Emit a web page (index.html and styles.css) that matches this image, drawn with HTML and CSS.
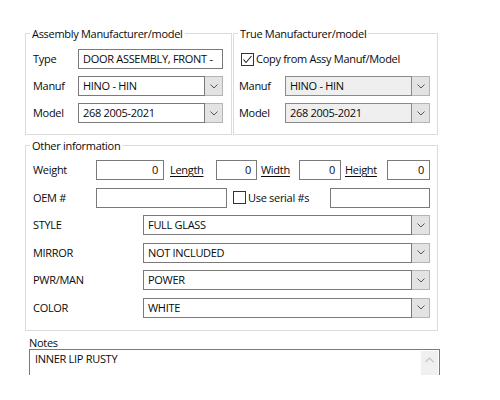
FILE: index.html
```html
<!DOCTYPE html>
<html>
<head>
<meta charset="utf-8">
<link rel="stylesheet" href="styles.css">
</head>
<body>
<div class="page">
  <div class="top">
    <div class="grp grp-assy">
      <div class="legend">Assembly Manufacturer/model</div>
      <div class="rows rows-top rows-assy">
        <div class="row">
          <span class="lbl lbl-assy">Type</span>
          <div class="tb tb-type"><span class="txt">DOOR ASSEMBLY, FRONT -</span></div>
        </div>
        <div class="row">
          <span class="lbl lbl-assy">Manuf</span>
          <div class="combo combo-top">
            <div class="field">HINO - HIN</div>
            <div class="btn"><svg width="8" height="5" viewBox="0 0 8 5"><polyline points="0.5,0.5 4,4 7.5,0.5" fill="none" stroke="#555" stroke-width="1"/></svg></div>
          </div>
        </div>
        <div class="row">
          <span class="lbl lbl-assy">Model</span>
          <div class="combo combo-top">
            <div class="field">268 2005-2021</div>
            <div class="btn"><svg width="8" height="5" viewBox="0 0 8 5"><polyline points="0.5,0.5 4,4 7.5,0.5" fill="none" stroke="#555" stroke-width="1"/></svg></div>
          </div>
        </div>
      </div>
    </div>
    <div class="grp grp-true">
      <div class="legend">True Manufacturer/model</div>
      <div class="rows rows-top rows-true">
        <div class="row">
          <span class="chk chk-true"><svg width="11" height="11" viewBox="0 0 11 11"><polyline points="1.5,5.5 4,8.5 9.5,2" fill="none" stroke="#222" stroke-width="1.1"/></svg></span>
          <span class="chk-text">Copy from Assy Manuf/Model</span>
        </div>
        <div class="row">
          <span class="lbl lbl-true">Manuf</span>
          <div class="combo combo-top combo-dis">
            <div class="field">HINO - HIN</div>
            <div class="btn"><svg width="8" height="5" viewBox="0 0 8 5"><polyline points="0.5,0.5 4,4 7.5,0.5" fill="none" stroke="#555" stroke-width="1"/></svg></div>
          </div>
        </div>
        <div class="row">
          <span class="lbl lbl-true">Model</span>
          <div class="combo combo-top combo-dis">
            <div class="field">268 2005-2021</div>
            <div class="btn"><svg width="8" height="5" viewBox="0 0 8 5"><polyline points="0.5,0.5 4,4 7.5,0.5" fill="none" stroke="#555" stroke-width="1"/></svg></div>
          </div>
        </div>
      </div>
    </div>
  </div>

  <div class="grp grp-other">
    <div class="legend">Other information</div>
    <div class="rows rows-other">
      <div class="row">
        <span class="lbl lbl-other">Weight</span>
        <div class="tb num w-weight">0</div>
        <span class="link l-length"><u>Length</u></span>
        <div class="tb num w-length">0</div>
        <span class="link l-width"><u>Width</u></span>
        <div class="tb num w-width">0</div>
        <span class="link l-height"><u>Height</u></span>
        <div class="tb num w-height">0</div>
      </div>
      <div class="row">
        <span class="lbl lbl-other">OEM #</span>
        <div class="tb w-oem"></div>
        <span class="chk chk-serial"></span>
        <span class="chk-text">Use serial #s</span>
        <span class="spacer"></span>
        <div class="tb w-serial"></div>
      </div>
      <div class="row">
        <span class="lbl lbl-attr">STYLE</span>
        <div class="combo combo-attr">
          <div class="field">FULL GLASS</div>
          <div class="btn"><svg width="8" height="5" viewBox="0 0 8 5"><polyline points="0.5,0.5 4,4 7.5,0.5" fill="none" stroke="#555" stroke-width="1"/></svg></div>
        </div>
      </div>
      <div class="row">
        <span class="lbl lbl-attr">MIRROR</span>
        <div class="combo combo-attr">
          <div class="field">NOT INCLUDED</div>
          <div class="btn"><svg width="8" height="5" viewBox="0 0 8 5"><polyline points="0.5,0.5 4,4 7.5,0.5" fill="none" stroke="#555" stroke-width="1"/></svg></div>
        </div>
      </div>
      <div class="row">
        <span class="lbl lbl-attr">PWR/MAN</span>
        <div class="combo combo-attr">
          <div class="field">POWER</div>
          <div class="btn"><svg width="8" height="5" viewBox="0 0 8 5"><polyline points="0.5,0.5 4,4 7.5,0.5" fill="none" stroke="#555" stroke-width="1"/></svg></div>
        </div>
      </div>
      <div class="row">
        <span class="lbl lbl-attr">COLOR</span>
        <div class="combo combo-attr">
          <div class="field">WHITE</div>
          <div class="btn"><svg width="8" height="5" viewBox="0 0 8 5"><polyline points="0.5,0.5 4,4 7.5,0.5" fill="none" stroke="#555" stroke-width="1"/></svg></div>
        </div>
      </div>
    </div>
  </div>

  <div class="notes-label">Notes</div>
  <div class="notes-box">
    <div class="notes-text">INNER LIP RUSTY</div>
    <div class="scroll"><svg width="9" height="6" viewBox="0 0 9 6"><polyline points="0.5,5 4.5,1 8.5,5" fill="none" stroke="#c4c4c4" stroke-width="1.2"/></svg></div>
  </div>
</div>
</body>
</html>
```

FILE: styles.css
```css
* {
  box-sizing: border-box;
}

body {
  margin: 0;
  background: #ffffff;
  font-family: "Open Sans", "Noto Sans", sans-serif;
  font-size: 11px;
  letter-spacing: -0.3px;
  color: #0a0a0a;
}

.page {
  padding: 33px 0 0 25px;
  width: 450px;
}

.top {
  display: flex;
  gap: 1px;
}

.grp {
  border: 1px solid #dcdcdc;
}

.grp-assy {
  width: 207px;
}

.grp-true {
  width: 205px;
}

.grp-other {
  width: 413px;
  margin-top: 10px;
}

.legend {
  width: max-content;
  margin: -8px 0 0 4px;
  padding: 0 2px;
  background: #ffffff;
  line-height: 15px;
  height: 15px;
}

.rows {
  display: flex;
  flex-direction: column;
}

.rows-top {
  gap: 7px;
  padding-top: 8px;
  padding-bottom: 11px;
}

.rows-assy {
  padding-left: 7px;
  padding-right: 8px;
}

.rows-true {
  padding-left: 5px;
  padding-right: 7px;
}

.rows-other {
  gap: 7.6px;
  padding: 7px 7px 12px 7px;
}

.row {
  display: flex;
  align-items: center;
  height: 20px;
  line-height: 14px;
}

.lbl {
  flex: none;
}

.lbl-assy {
  width: 45px;
}

.lbl-true {
  width: 46px;
}

.lbl-other {
  width: 63px;
}

.lbl-attr {
  width: 110px;
}

.tb {
  flex: none;
  height: 20px;
  border: 1px solid #7a7a7a;
  background: #ffffff;
  padding: 2px 4px;
  white-space: nowrap;
  overflow: hidden;
}

.tb-type {
  width: 145px;
}

.num {
  text-align: right;
  padding-right: 5px;
}

.w-weight {
  width: 68px;
}

.w-length {
  width: 41px;
}

.w-width {
  width: 42px;
}

.w-height {
  width: 43px;
}

.w-oem {
  width: 131px;
}

.w-serial {
  width: 100px;
}

.link {
  flex: none;
}

.link u {
  text-decoration: underline;
  text-underline-offset: 2px;
}

.l-length {
  width: 52px;
  padding-left: 6px;
}

.l-width {
  width: 42px;
  padding-left: 4px;
}

.l-height {
  width: 46px;
  padding-left: 4px;
}

.spacer {
  flex: 1;
}

.chk {
  flex: none;
  width: 13px;
  height: 13px;
  border: 1px solid #333333;
  background: #ffffff;
  display: flex;
  align-items: center;
  justify-content: center;
}

.chk-true {
  margin-left: 2px;
}

.chk-serial {
  margin-left: 6px;
}

.chk-text {
  margin-left: 2px;
  white-space: nowrap;
}

.combo {
  flex: none;
  display: flex;
  height: 20px;
}

.combo-top {
  width: 145px;
}

.combo-attr {
  flex: 1;
}

.combo .field {
  flex: 1;
  border: 1px solid #7a7a7a;
  background: #ffffff;
  padding: 2px 4px;
  white-space: nowrap;
  overflow: hidden;
}

.combo-dis .field {
  background: #efefef;
  border-color: #8a8a8a;
}

.combo .btn {
  flex: none;
  width: 18px;
  background: #e3e3e3;
  border: 1px solid #b4b4b4;
  border-left: none;
  display: flex;
  align-items: center;
  justify-content: center;
}

.notes-label {
  margin: 5px 0 0 4px;
  line-height: 13px;
  height: 13px;
}

.notes-box {
  margin-left: 4px;
  width: 411px;
  height: 26px;
  border: 1px solid #7a7a7a;
  border-bottom: none;
  display: flex;
}

.notes-text {
  flex: 1;
  padding: 2px 5px;
  line-height: 14px;
}

.scroll {
  flex: none;
  width: 17px;
  margin: 1px 1px 0 0;
  background: #f0f0f0;
  display: flex;
  justify-content: center;
  padding-top: 6px;
}
```
